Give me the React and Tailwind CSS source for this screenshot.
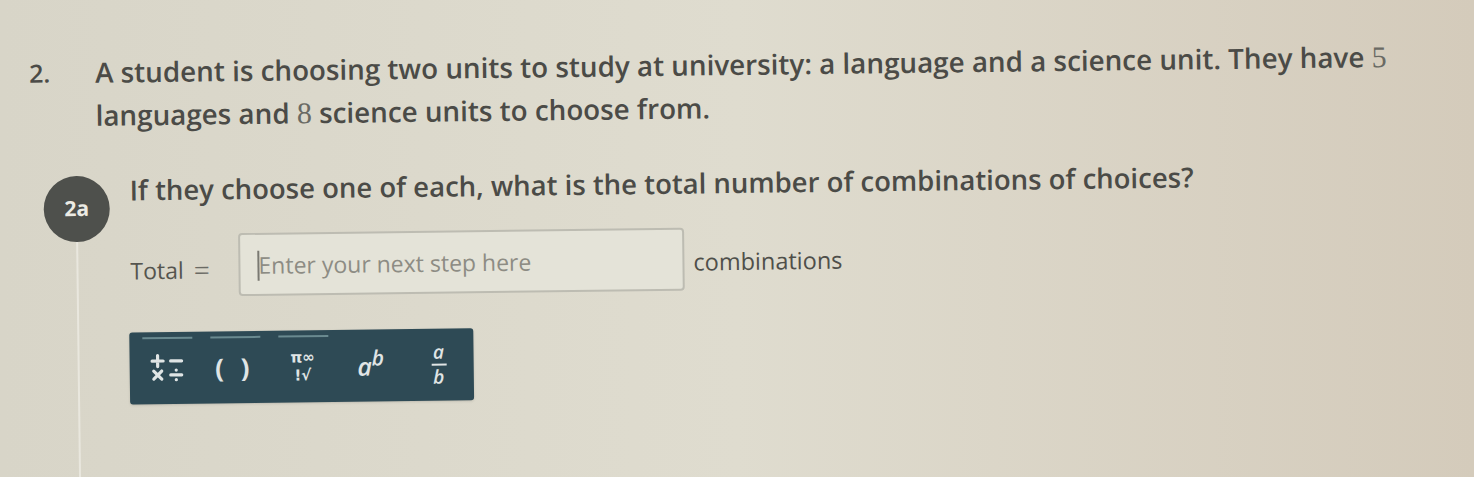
import { useState } from "react";

const MathNum = ({ children }) => (
  <span className="font-['Liberation_Serif',serif] font-normal text-[30px] text-[#6a6a64]">{children}</span>
);

const ToolButton = ({ children, tab }) => (
  <button className="relative flex h-full w-[68px] items-center justify-center text-[#e0e5e5]">
    {tab && <span className="absolute left-[10px] right-[8px] top-[5px] h-[2px] bg-[#6a8a90]" />}
    {children}
  </button>
);

const OperatorsIcon = () => (
  <svg width="34" height="30" viewBox="0 0 34 30" fill="none" stroke="currentColor" strokeWidth="3.2" strokeLinecap="round">
    <path d="M8 2.5v11M2.5 8h11" />
    <path d="M21 8h11" />
    <path d="M4 18l8 8M12 18l-8 8" />
    <path d="M21 22h11" />
    <circle cx="26.5" cy="17.2" r="1.6" fill="currentColor" stroke="none" />
    <circle cx="26.5" cy="26.8" r="1.6" fill="currentColor" stroke="none" />
  </svg>
);

const App = () => {
  const [value, setValue] = useState("");

  return (
    <div className="h-[477px] w-[1474px] overflow-hidden bg-gradient-to-r from-[#d8d5c8] via-[#dfdccf] to-[#d4cbbb] font-['Open_Sans',sans-serif] text-[#4b4b47]">
      {/* photo of the screen is tilted slightly */}
      <div className="origin-[0_230px] -rotate-[0.7deg]">
        {/* Question stem */}
        <div className="flex pl-[31px] pt-[52px]">
          <div className="w-[66px] text-[25px] font-semibold leading-[43px]">2.</div>
          <p className="w-[1340px] text-[27.8px] font-semibold leading-[43px]">
            A student is choosing two units to study at university: a language and a science unit. They have <MathNum>5</MathNum>{" "}
            languages and <MathNum>8</MathNum> science units to choose from.
          </p>
        </div>

        {/* Part 2a */}
        <div className="mt-[36px] flex">
          <div className="flex w-[130px] flex-col items-center pl-[24px]">
            <div className="mt-[3px] flex h-[66px] w-[66px] shrink-0 items-center justify-center rounded-full bg-[#4e504c] text-[21px] font-bold text-[#ecebe4]">
              2a
            </div>
            <div className="h-[300px] w-[2px] bg-[#e9e7de]" />
          </div>

          <div className="flex flex-col">
            <h3 className="text-[27.5px] font-semibold leading-[36px]">
              If they choose one of each, what is the total number of combinations of choices?
            </h3>

            <div className="mt-[26px] flex items-center">
              <span className="mt-[10px] flex w-[108px] items-center text-[23px] text-[#55554f]">
                Total
                <span className="ml-[10px] font-['Liberation_Serif',serif] text-[28px] text-[#6a6a64]">=</span>
              </span>
              <div className="relative">
                <input
                  value={value}
                  onChange={(e) => setValue(e.target.value)}
                  placeholder="Enter your next step here"
                  className="h-[63px] w-[446px] rounded-[4px] border-2 border-[#bdbcb2] bg-[#e4e3d8] px-[18px] text-[23px] text-[#55554f] placeholder:text-[#8d8c84] outline-none"
                />
                {!value && <span className="pointer-events-none absolute left-[19px] top-[18px] h-[30px] w-[2px] bg-[#7a7972]" />}
              </div>
              <span className="ml-[9px] mt-[6px] text-[23.5px] text-[#4f4f4a]">combinations</span>
            </div>

            {/* Math toolbar */}
            <div className="-ml-[2px] mt-[35px] flex h-[72px] w-[344px] items-center rounded-[3px] bg-[#2e4a55] pl-[3px] shadow-sm">
              <ToolButton tab>
                <OperatorsIcon />
              </ToolButton>
              <ToolButton tab>
                <span className="text-[26px] font-bold leading-[30px] tracking-[5px]">( )</span>
              </ToolButton>
              <ToolButton tab>
                <span className="flex flex-col items-center gap-[3px] font-['DejaVu_Sans',sans-serif] text-[15px] font-bold leading-[15px]">
                  <span>π∞</span>
                  <span>!√</span>
                </span>
              </ToolButton>
              <ToolButton>
                <span className="text-[25px] font-semibold italic leading-[30px]">
                  a<sup className="text-[21px]">b</sup>
                </span>
              </ToolButton>
              <ToolButton>
                <span className="flex flex-col items-center text-[19px] font-semibold italic leading-[19px]">
                  <span>a</span>
                  <span className="my-[2px] h-[2px] w-[15px] bg-[#e0e5e5]" />
                  <span>b</span>
                </span>
              </ToolButton>
            </div>
          </div>
        </div>
      </div>
    </div>
  );
};

export default App;
